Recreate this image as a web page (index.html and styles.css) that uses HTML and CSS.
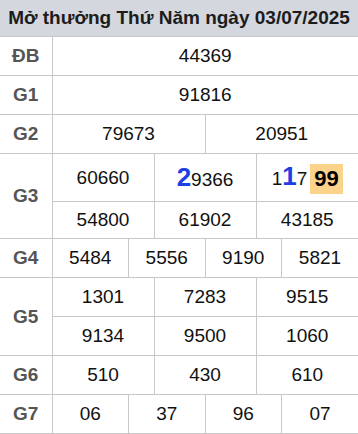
FILE: index.html
```html
<!DOCTYPE html>
<html lang="vi">
<head>
<meta charset="utf-8">
<link rel="stylesheet" href="styles.css">
</head>
<body>
<div class="board">
  <div class="title">Mở thưởng Thứ Năm ngày 03/07/2025</div>
  <table class="results">
    <colgroup>
      <col class="c-label">
      <col><col><col><col><col><col><col><col><col><col><col><col>
    </colgroup>
    <tbody>
      <tr><th>ĐB</th><td colspan="12">44369</td></tr>
      <tr><th>G1</th><td colspan="12">91816</td></tr>
      <tr><th>G2</th><td colspan="6">79673</td><td colspan="6">20951</td></tr>
      <tr class="tall"><th rowspan="2">G3</th>
        <td colspan="4">60660</td>
        <td colspan="4"><span class="big">2</span>9366</td>
        <td colspan="4">1<span class="big">1</span>7<span class="hot">99</span></td>
      </tr>
      <tr class="short"><td colspan="4">54800</td><td colspan="4">61902</td><td colspan="4">43185</td></tr>
      <tr><th>G4</th><td colspan="3">5484</td><td colspan="3">5556</td><td colspan="3">9190</td><td colspan="3">5821</td></tr>
      <tr><th rowspan="2">G5</th><td colspan="4">1301</td><td colspan="4">7283</td><td colspan="4">9515</td></tr>
      <tr><td colspan="4">9134</td><td colspan="4">9500</td><td colspan="4">1060</td></tr>
      <tr><th>G6</th><td colspan="4">510</td><td colspan="4">430</td><td colspan="4">610</td></tr>
      <tr><th>G7</th><td colspan="3">06</td><td colspan="3">37</td><td colspan="3">96</td><td colspan="3">07</td></tr>
    </tbody>
  </table>
</div>
</body>
</html>
```

FILE: styles.css
```css
html, body {
  margin: 0;
  padding: 0;
  background: #fff;
}
body {
  font-family: "Liberation Sans", Arial, sans-serif;
  width: 358px;
  overflow: hidden;
}
.board {
  width: 358px;
}
.title {
  height: 36px;
  line-height: 36px;
  background: #d4d7de;
  color: #1c1c1c;
  font-weight: bold;
  font-size: 19px;
  text-align: center;
  white-space: nowrap;
  border-bottom: 1px solid #c8c8c8;
}
.results {
  width: 358px;
  border-collapse: collapse;
  table-layout: fixed;
}
.c-label {
  width: 52px;
}
.results th,
.results td {
  border: 1px solid #c8c8c8;
  height: 38px;
  padding: 0;
  text-align: center;
  vertical-align: middle;
}
.results tr:first-child th,
.results tr:first-child td {
  border-top: none;
}
.results tr > :first-child {
  border-left: none;
}
.results tr > :last-child {
  border-right: none;
}
.results th {
  color: #555;
  font-size: 19px;
  font-weight: bold;
}
.results td {
  color: #111;
  font-size: 19px;
}
.results tr.tall td {
  height: 47px;
}
.results tr.short td {
  height: 36px;
}
.big {
  color: #1d3fe6;
  font-weight: bold;
  font-size: 26px;
}
.hot {
  display: inline-block;
  background: #fbd38a;
  color: #000;
  font-weight: bold;
  font-size: 22px;
  line-height: 30px;
  padding: 0 4px;
  margin-left: 3px;
  vertical-align: middle;
}
```
